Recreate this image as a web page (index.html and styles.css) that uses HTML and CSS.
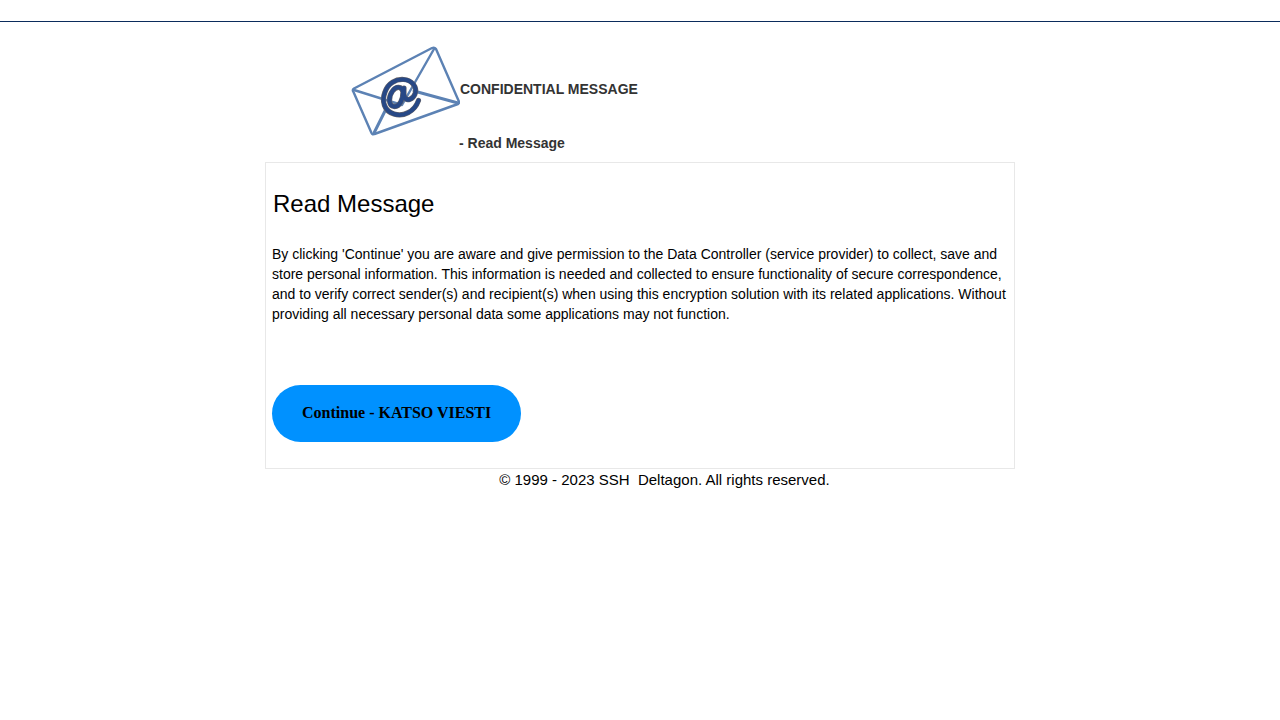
FILE: index.html
```html
<!DOCTYPE html>
<html lang="en">
<head>
<meta charset="utf-8">
<meta name="viewport" content="width=device-width, initial-scale=1">
<title>Confidential Message - Read Message</title>
<link rel="stylesheet" href="styles.css">
</head>
<body>
<div class="topbar"></div>
<div class="page">
  <header class="header">
    <svg class="logo" viewBox="0 0 110 91" aria-hidden="true">
      <g fill="none" stroke-linejoin="round" stroke-linecap="round">
        <g stroke="#5c82b4" stroke-width="2.4">
          <path d="M3.500 46 L21.500 87 Q22.500 89 24.500 88 L108 58 Q109.500 57 108.700 55 L86 3 Q84.500 .9 82 2 L4 42.500 Q2 44 3.500 46"/>
          <path d="M84 3 L52 59 L4 44"/>
          <path d="M64 45 L108 57 M36 63 L24 87" stroke-width="3"/>
        </g>
        <g stroke="#66646a" stroke-width="5.200">
          <path d="M68.500 54.500 C64.500 66 53 71 44 68 C34 65 31.500 55 35 46 C38 37 46 33 53.500 33.500 C62 34 67.500 41 65 48 C63 53 57 56 54.500 51 C53.500 48 54 45 54 42"/>
          <path d="M53 46 C52 40 46 40 42.500 45 C38 51 38.500 60 44 60.500 C50 61 53 53 53 46"/>
        </g>
        <g stroke="#274886" stroke-width="4">
          <path d="M68.500 54.500 C64.500 66 53 71 44 68 C34 65 31.500 55 35 46 C38 37 46 33 53.500 33.500 C62 34 67.500 41 65 48 C63 53 57 56 54.500 51 C53.500 48 54 45 54 42"/>
          <path d="M53 46 C52 40 46 40 42.500 45 C38 51 38.500 60 44 60.500 C50 61 53 53 53 46"/>
        </g>
      </g>
    </svg>
    <div class="titles">
      <p class="title">CONFIDENTIAL MESSAGE</p>
      <p class="subtitle">- Read Message</p>
    </div>
  </header>
  <main class="panel">
    <h1 class="heading">Read Message</h1>
    <p class="notice">By clicking 'Continue' you are aware and give permission to the Data Controller (service provider) to collect, save and store personal information. This information is needed and collected to ensure functionality of secure correspondence, and to verify correct sender(s) and recipient(s) when using this encryption solution with its related applications. Without providing all necessary personal data some applications may not function.</p>
    <button class="continue" type="button">Continue - KATSO VIESTI</button>
  </main>
  <footer class="footer">© 1999 - 2023 SSH&nbsp; Deltagon. All rights reserved.</footer>
</div>
</body>
</html>
```
FILE: styles.css
```css
* {
  box-sizing: border-box;
}

body {
  margin: 0;
  background: #fff;
  color: #000;
  font-family: "Liberation Sans", Arial, sans-serif;
  font-size: 14px;
  line-height: 20px;
}

.topbar {
  height: 22px;
  border-bottom: 1px solid #0b2c5c;
}

.page {
  max-width: 750px;
  margin: 0 auto;
}

.header {
  display: flex;
  align-items: flex-start;
  padding: 24px 0 9px 85px;
}

.logo {
  width: 110px;
  height: 91px;
  flex: none;
}

.titles {
  padding-top: 33px;
  color: #333;
  font-weight: bold;
}

.title,
.subtitle {
  margin: 0;
}

.title {
  margin-bottom: 34px;
}

.subtitle {
  margin-left: -1px;
}

.panel {
  padding: 27px 6px 26px;
  border: 1px solid #e8e8e8;
}

.heading {
  margin: 0 1px 26px;
  font-size: 24px;
  line-height: 28px;
  font-weight: normal;
}

.notice {
  margin: 0 0 61px;
}

.continue {
  display: block;
  padding: 18px 30px 20px;
  border: 0;
  border-radius: 29px;
  background: #0091ff;
  color: #000;
  font: bold 16px/19px "Liberation Serif", "Times New Roman", serif;
}

.footer {
  padding-left: 49px;
  font-size: 15px;
  line-height: 22px;
  text-align: center;
}
```
